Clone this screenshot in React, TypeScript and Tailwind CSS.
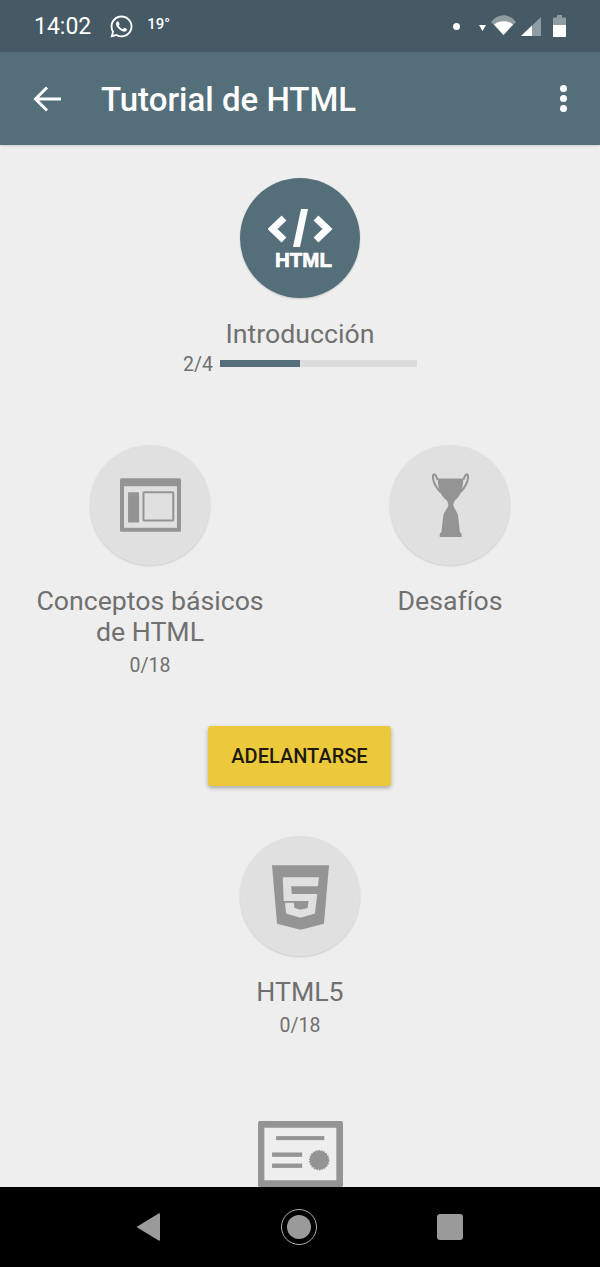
import React from 'react';
import { FaWhatsapp } from 'react-icons/fa';

const GRAY = '#949494';

const StatusBar: React.FC = () => (
  <div className="h-[52px] shrink-0 bg-[#455a64] flex items-center pl-[34px] pr-[34px] text-white">
    <span className="text-[23px] leading-none mt-[1px]">14:02</span>
    <FaWhatsapp className="ml-[18px] w-[25px] h-[25px]" />
    <span className="ml-[13px] text-[15px] font-medium leading-none -mt-[3px]">19°</span>
    <div className="ml-auto flex items-center">
      <span className="w-[7px] h-[7px] rounded-full bg-white" />
      <svg className="ml-[19px] mt-[4px]" width="7" height="6" viewBox="0 0 7 6"><path d="M0 0H7L3.500 6Z" fill="#fff" /></svg>
      <svg className="ml-[5px] -mt-[2px]" width="25" height="20" viewBox="0 0 25 20">
        <path d="M0 7C7 -2 18 -2 25 7L12.500 20Z" fill="#fff" fillOpacity="0.4" />
        <path d="M3 9.500C8 5 17 5 22 9.500L12.500 20Z" fill="#fff" />
      </svg>
      <svg className="ml-[5px] mt-[1px]" width="20" height="19" viewBox="0 0 20 19">
        <path d="M0 19L20 0V19Z" fill="#fff" fillOpacity="0.4" />
        <path d="M0 19L11 8.500V19Z" fill="#fff" />
      </svg>
      <svg className="ml-[12px]" width="13" height="22" viewBox="0 0 13 22">
        <path d="M4 0H9V2.500H12C12.600 2.500 13 2.900 13 3.500V21C13 21.600 12.600 22 12 22H1C0.400 22 0 21.600 0 21V3.500C0 2.900 0.400 2.500 1 2.500H4Z" fill="#fff" fillOpacity="0.4" />
        <path d="M0 10H13V21C13 21.600 12.600 22 12 22H1C0.400 22 0 21.600 0 21Z" fill="#fff" />
      </svg>
    </div>
  </div>
);

const Toolbar: React.FC = () => (
  <div className="h-[93px] shrink-0 bg-[#546e7a] flex items-center pl-[33px] pr-[33px] text-white shadow-sm relative">
    <svg width="28" height="28" viewBox="0 0 28 28" fill="none" stroke="#fff" strokeWidth="3">
      <path d="M28 14H3M14 2.500L2.500 14L14 25.500" />
    </svg>
    <h1 className="ml-[40px] mt-[2px] text-[33px] font-medium leading-none">Tutorial de HTML</h1>
    <div className="ml-auto flex flex-col gap-[3px]">
      <span className="w-[7px] h-[7px] rounded-full bg-white" />
      <span className="w-[7px] h-[7px] rounded-full bg-white" />
      <span className="w-[7px] h-[7px] rounded-full bg-white" />
    </div>
  </div>
);

const Circle: React.FC<{ active?: boolean; children: React.ReactNode }> = ({ active, children }) => (
  <div className={`w-[120px] h-[120px] rounded-full flex items-center justify-center shrink-0 shadow-[0_1px_2px_rgba(0,0,0,0.15)] ${active ? 'bg-[#546e7a]' : 'bg-[#e0e0e0]'}`}>
    {children}
  </div>
);

const HtmlIcon = () => (
  <svg className="mt-[4px] ml-[2px]" width="66" height="62" viewBox="0 0 66 62">
    <path d="M16 9L4.500 20L16 31" fill="none" stroke="#fff" strokeWidth="7" />
    <path d="M48 9L59.500 20L48 31" fill="none" stroke="#fff" strokeWidth="7" />
    <path d="M33 0H40L32 38H25Z" fill="#fff" />
    <text x="7" y="58" fill="#fff" fontSize="20.500" fontWeight="700" stroke="#fff" strokeWidth="0.700" fontFamily="'Liberation Sans', sans-serif">HTML</text>
  </svg>
);

const ConceptsIcon = () => (
  <svg width="61" height="54" viewBox="0 0 182 160">
    <rect width="182" height="160" rx="5" fill={GRAY} />
    <rect x="12" y="24" width="158" height="124" fill="#e0e0e0" />
    <rect x="24" y="42" width="33" height="90" rx="2" fill={GRAY} />
    <rect x="70" y="42" width="89" height="84" rx="2" fill="none" stroke={GRAY} strokeWidth="6" />
  </svg>
);

const TrophyIcon = () => (
  <svg width="37" height="64" viewBox="155 110 110 190">
    <path d="M172 126H248C248 160 238 180 222 192L218 205C220 214 228 222 232 235C235 255 236 272 238 286L243 290V300H178V290L183 286C185 272 186 255 189 235C193 222 202 214 204 205L200 192C184 180 172 160 172 126Z" fill={GRAY} />
    <path d="M172 130C168 122 166 112 160 114C155 120 158 145 182 168" fill="none" stroke={GRAY} strokeWidth="6" />
    <path d="M248 130C252 122 254 112 260 114C265 120 262 145 238 168" fill="none" stroke={GRAY} strokeWidth="6" />
  </svg>
);

const Html5Icon = () => (
  <svg className="mt-[2px]" width="57" height="65" viewBox="125 105 170 193">
    <path d="M125 105H295L280 280L210 298L140 280Z" fill={GRAY} />
    <path d="M157 141H265L262 168H182L184 191H260L253 249L210 262L167 249L164 217H190L192 233L210 238L231 233L234 212H160Z" fill="#e0e0e0" />
  </svg>
);

const CertificateIcon = () => (
  <svg width="85" height="66" viewBox="0 0 254 197" className="shrink-0">
    <rect width="254" height="197" rx="5" fill={GRAY} />
    <rect x="19" y="20" width="215" height="157" fill="#eeeeee" />
    <rect x="54" y="45" width="144" height="12" fill={GRAY} />
    <rect x="42" y="94" width="90" height="13" fill={GRAY} />
    <rect x="42" y="127" width="90" height="13" fill={GRAY} />
    <circle cx="183" cy="117" r="28" fill={GRAY} stroke={GRAY} strokeWidth="5" strokeDasharray="5 3" />
  </svg>
);

const Lesson: React.FC<{ title: React.ReactNode; progress?: string; children: React.ReactNode }> = ({ title, progress, children }) => (
  <div className="flex flex-col items-center">
    <Circle>{children}</Circle>
    <div className="mt-[21px] text-[26.700px] leading-[31px] text-[#707070] text-center">{title}</div>
    {progress && <div className="mt-[5px] text-[19.500px] leading-[26px] text-[#707070]">{progress}</div>}
  </div>
);

const App: React.FC = () => {
  return (
    <div className="w-[600px] h-[1267px] flex flex-col overflow-hidden bg-black font-['Roboto',sans-serif]">
      <StatusBar />
      <Toolbar />

      <div className="flex-1 min-h-0 overflow-hidden bg-[#eeeeee] flex flex-col items-center pt-[33px]">
        <Circle active><HtmlIcon /></Circle>
        <div className="mt-[21px] shrink-0 text-[26.700px] leading-[31px] text-[#707070]">Introducción</div>
        <div className="mt-[3px] shrink-0 flex items-center">
          <span className="text-[19.500px] leading-[24px] text-[#707070]">2/4</span>
          <div className="ml-[7px] -mt-[3px] w-[197px] h-[7px] bg-[#dcdcdc]">
            <div className="w-[80px] h-full bg-[#546e7a]" />
          </div>
        </div>

        <div className="mt-[68px] shrink-0 w-full grid grid-cols-2">
          <Lesson title={<>Conceptos básicos<br />de HTML</>} progress="0/18"><ConceptsIcon /></Lesson>
          <Lesson title="Desafíos"><TrophyIcon /></Lesson>
        </div>

        <button className="mt-[47px] -ml-[1px] shrink-0 w-[183px] h-[60px] rounded-[3px] bg-[#ebc93b] text-[20px] font-medium text-[#1c1a10] shadow-[0_2px_4px_rgba(0,0,0,0.3)]">
          ADELANTARSE
        </button>

        <div className="mt-[50px] shrink-0">
          <Lesson title="HTML5" progress="0/18"><Html5Icon /></Lesson>
        </div>

        <div className="mt-[82px] shrink-0">
          <CertificateIcon />
        </div>
      </div>

      <div className="h-[80px] shrink-0 bg-black flex items-center pl-[136px] pr-[137px] justify-between">
        <svg width="25" height="28" viewBox="0 0 25 28"><path d="M24 0.500V27.500L22.500 27.500L0.500 14L22.500 0.500Z" fill="#9a9a9a" /></svg>
        <div className="w-[36px] h-[36px] rounded-full border border-[#b0b0b0] flex items-center justify-center">
          <span className="w-[24px] h-[24px] rounded-full bg-[#9a9a9a]" />
        </div>
        <span className="w-[26px] h-[26px] rounded-[3px] bg-[#9a9a9a]" />
      </div>
    </div>
  );
};

export default App;
